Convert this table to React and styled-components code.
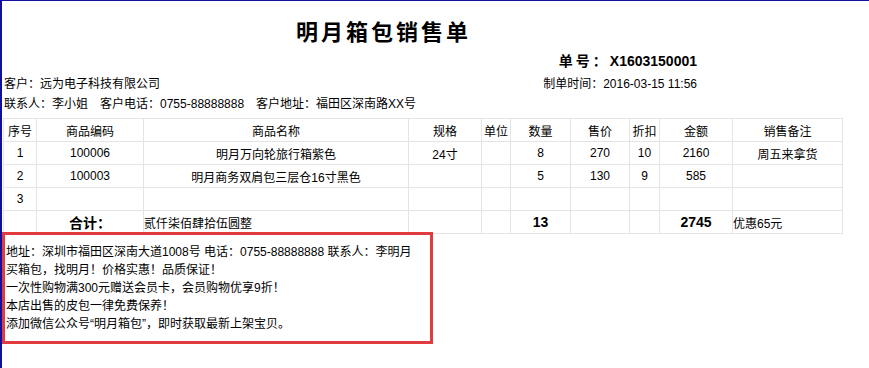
import styled, { createGlobalStyle } from 'styled-components';

const GlobalStyle = createGlobalStyle`
  html, body {
    margin: 0;
    padding: 0;
    background: #fff;
  }
  body {
    font-family: "Liberation Sans", "Noto Sans CJK SC", sans-serif;
    font-size: 12px;
    color: #000;
  }
`

const columns = [
  { title: '序号', width: 33 },
  { title: '商品编码', width: 107 },
  { title: '商品名称', width: 265 },
  { title: '规格', width: 73 },
  { title: '单位', width: 29 },
  { title: '数量', width: 60 },
  { title: '售价', width: 59 },
  { title: '折扣', width: 30 },
  { title: '金额', width: 73 },
  { title: '销售备注', width: 110 },
]

const rows = [
  ['1', '100006', '明月万向轮旅行箱紫色', '24寸', '', '8', '270', '10', '2160', '周五来拿货'],
  ['2', '100003', '明月商务双肩包三层仓16寸黑色', '', '', '5', '130', '9', '585', ''],
  ['3', '', '', '', '', '', '', '', '', ''],
]

const notes = [
  '地址：深圳市福田区深南大道1008号 电话：0755-88888888 联系人：李明月',
  '买箱包，找明月！价格实惠！品质保证！',
  '一次性购物满300元赠送会员卡，会员购物优享9折！',
  '本店出售的皮包一律免费保养！',
  '添加微信公众号“明月箱包”，即时获取最新上架宝贝。',
]

const App = () => {
  return (
    <Page>
      <GlobalStyle />
      <Title>明月箱包销售单</Title>
      <OrderNo>
        <span className="label">单号：</span>X1603150001
      </OrderNo>
      <MetaRow>
        <span>客户：远为电子科技有限公司</span>
        <span className="time">制单时间：2016-03-15 11:56</span>
      </MetaRow>
      <InfoLine>
        <span>联系人：李小姐</span>
        <span>客户电话：0755-88888888</span>
        <span>客户地址：福田区深南路XX号</span>
      </InfoLine>
      <Table>
        <colgroup>
          {columns.map((c) => (
            <col key={c.title} style={{ width: c.width }} />
          ))}
        </colgroup>
        <thead>
          <tr>
            {columns.map((c) => (
              <Cell as="th" key={c.title}>{c.title}</Cell>
            ))}
          </tr>
        </thead>
        <tbody>
          {rows.map((r, i) => (
            <tr key={i}>
              {r.map((v, j) => (
                <Cell key={j}>{v}</Cell>
              ))}
            </tr>
          ))}
          <tr>
            <Cell />
            <Cell $bold>合计：</Cell>
            <Cell $left>贰仟柒佰肆拾伍圆整</Cell>
            <Cell />
            <Cell />
            <Cell $bold>13</Cell>
            <Cell />
            <Cell />
            <Cell $bold>2745</Cell>
            <Cell $left>优惠65元</Cell>
          </tr>
        </tbody>
      </Table>
      <Notes>
        {notes.map((n) => (
          <div key={n}>{n}</div>
        ))}
      </Notes>
    </Page>
  )
}

const Page = styled.div`
  height: 367px;
  border-top: 1px solid #10109c;
  border-left: 2px solid #10109c;
  overflow: hidden;
`

const Title = styled.h1`
  width: 760px;
  margin: 14px 0 0;
  height: 30px;
  line-height: 30px;
  text-align: center;
  font-family: "Noto Sans CJK SC", sans-serif;
  font-size: 22px;
  font-weight: bold;
  letter-spacing: 3px;
  text-indent: 3px;
`

const OrderNo = styled.div`
  width: 695px;
  margin-top: 5px;
  height: 20px;
  line-height: 20px;
  text-align: right;
  font-size: 14px;
  font-weight: bold;

  .label {
    font-family: "Noto Sans CJK SC", sans-serif;
    letter-spacing: 3px;
  }
`

const MetaRow = styled.div`
  width: 693px;
  margin-top: 4px;
  padding-left: 2px;
  height: 20px;
  line-height: 20px;
  display: flex;
  justify-content: space-between;
`

const InfoLine = styled.div`
  padding-left: 2px;
  height: 20px;
  line-height: 20px;
  display: flex;
  gap: 12px;
`

const Table = styled.table`
  margin: 4px 0 0 1px;
  width: 839px;
  table-layout: fixed;
  border-collapse: collapse;
`

const Cell = styled.td`
  height: 22px;
  padding: 0;
  border: 1px solid #e4e4e4;
  text-align: ${(p) => (p.$left ? 'left' : 'center')};
  font-weight: ${(p) => (p.$bold ? 'bold' : 'normal')};
  font-size: ${(p) => (p.$bold ? '14px' : '12px')};
  white-space: nowrap;
  overflow: hidden;
`

const Notes = styled.div`
  width: 424px;
  margin-top: -2px;
  padding: 8px 0 8px 1px;
  border: 3px solid #e23b3f;
  line-height: 18px;
  font-size: 12px;
`

export default App
